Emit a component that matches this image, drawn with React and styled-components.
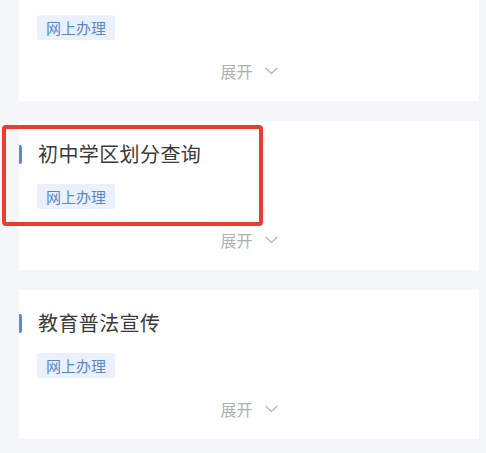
import React from 'react';
import styled, { createGlobalStyle } from 'styled-components';

const GlobalStyle = createGlobalStyle`
  html, body {
    margin: 0;
    padding: 0;
    background: #f5f6f8;
    overflow: hidden;
    font-family: "Noto Sans CJK SC", "Noto Sans", sans-serif;
  }
`;

const Page = styled.div`
  width: 486px;
  height: 453px;
  overflow: hidden;
  background: #f5f6f8;
`;

const List = styled.div`
  display: flex;
  flex-direction: column;
  gap: 20px;
  margin: -48px 7px 0 19px;
`;

const Card = styled.div`
  position: relative;
  background: #ffffff;
  height: 149px;
  box-sizing: border-box;
  padding: 19px 18px 0 18px;
  display: flex;
  flex-direction: column;
  align-items: flex-start;
`;

const TitleRow = styled.div`
  display: flex;
  align-items: center;
  margin-left: -18px;
  height: 28px;
`;

const Bar = styled.span`
  width: 3px;
  height: 19px;
  background: #5a8ae0;
  border-radius: 0 2px 2px 0;
  margin-right: 16px;
`;

const Title = styled.span`
  font-size: 20px;
  line-height: 28px;
  color: #3a3a3a;
  letter-spacing: 0.4px;
`;

const Tag = styled.span`
  margin-top: 16px;
  height: 25px;
  line-height: 25px;
  padding: 0 9px;
  font-size: 15px;
  color: #5b87c8;
  background: #eaf1fc;
  border-radius: 3px;
`;

const Expand = styled.div`
  align-self: center;
  margin-top: 20px;
  display: flex;
  align-items: center;
  gap: 12px;
  font-size: 16px;
  line-height: 22px;
  color: #b0b0b0;
`;

const Highlight = styled.div`
  position: absolute;
  left: -17px;
  top: 4px;
  width: 261px;
  height: 101px;
  box-sizing: border-box;
  border: 4px solid #ec3b2f;
  border-radius: 4px;
  pointer-events: none;
`;

const Chevron = () => (
  <svg width="13" height="8" viewBox="0 0 13 8" fill="none">
    <path d="M1 1.2L6.5 6.5L12 1.2" stroke="#b8b8b8" strokeWidth="1.3" strokeLinecap="round" strokeLinejoin="round" />
  </svg>
);

const items = [
  { title: '小学学区划分查询' },
  { title: '初中学区划分查询', marked: true },
  { title: '教育普法宣传' },
];

export default function App() {
  return (
    <Page>
      <GlobalStyle />
      <List>
        {items.map((item) => (
          <Card key={item.title}>
            <TitleRow>
              <Bar />
              <Title>{item.title}</Title>
            </TitleRow>
            <Tag>网上办理</Tag>
            <Expand>
              展开
              <Chevron />
            </Expand>
            {item.marked && <Highlight />}
          </Card>
        ))}
      </List>
    </Page>
  );
}
